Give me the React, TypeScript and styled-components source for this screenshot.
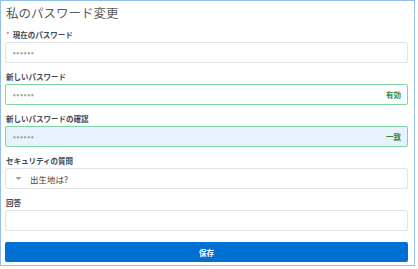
import React from "react";
import styled, { createGlobalStyle } from "styled-components";

const Global = createGlobalStyle`
  html, body { margin: 0; padding: 0; background: #ffffff; }
  body { font-family: "Noto Sans CJK JP", "Noto Sans", sans-serif; }
  * { box-sizing: border-box; }
`;

const Frame = styled.div`
  width: 415px;
  height: 266px;
  border: 1px solid #93bfe8;
  padding: 4px 6px 0 4px;
  display: flex;
  flex-direction: column;
  gap: 10px;
`;

const Title = styled.h1`
  margin: 0 0 -10px 0;
  font-size: 12.5px;
  font-weight: 400;
  color: #5a5a5a;
  line-height: 16px;
  height: 26px;
  padding-left: 1px;
  flex-shrink: 0;
`;

const Field = styled.div`
  display: flex;
  flex-direction: column;
  flex-shrink: 0;
`;

const Label = styled.label`
  font-size: 7.5px;
  font-weight: 700;
  color: #444a55;
  line-height: 7px;
  height: 11px;
  display: flex;
  align-items: flex-start;
  gap: 3px;
  padding-left: 1px;
`;

const Required = styled.span`
  color: #e2524a;
  font-size: 8px;
  font-weight: 400;
`;

const Box = styled.div<{ $state?: "ok" | "focus" }>`
  height: 21px;
  border: 1px solid
    ${(p) => (p.$state ? "#7fd4a2" : "#e1e3ec")};
  border-radius: 2px;
  background: ${(p) => (p.$state === "focus" ? "#e8f2fc" : "#ffffff")};
  display: flex;
  align-items: center;
  padding: 0 6px 0 7px;
  gap: 8px;
`;

const Dots = styled.span`
  font-family: "DejaVu Sans", sans-serif;
  font-size: 3px;
  letter-spacing: 1px;
  color: #a2a2a2;
  flex: 1;
`;

const Status = styled.span`
  font-size: 7.5px;
  font-weight: 700;
  color: #2f8a3c;
`;

const Caret = styled.svg`
  width: 7px;
  height: 5px;
  margin-left: 2px;
`;

const SelectText = styled.span`
  font-size: 8.5px;
  color: #444444;
`;

const SaveButton = styled.button`
  margin-top: 1px;
  height: 20px;
  flex-shrink: 0;
  border: none;
  border-radius: 2px;
  background: #0070d2;
  color: #ffffff;
  font-family: "Noto Sans CJK JP", sans-serif;
  font-size: 7.5px;
  font-weight: 700;
  padding: 0;
  width: 100%;
`;

export default function App() {
  return (
    <>
      <Global />
      <Frame>
        <Title>私のパスワード変更</Title>
        <Field>
          <Label>
            <Required>*</Required>現在のパスワード
          </Label>
          <Box>
            <Dots>●●●●●●</Dots>
          </Box>
        </Field>
        <Field>
          <Label>新しいパスワード</Label>
          <Box $state="ok">
            <Dots>●●●●●●</Dots>
            <Status>有効</Status>
          </Box>
        </Field>
        <Field>
          <Label>新しいパスワードの確認</Label>
          <Box $state="focus">
            <Dots>●●●●●●</Dots>
            <Status>一致</Status>
          </Box>
        </Field>
        <Field>
          <Label>セキュリティの質問</Label>
          <Box>
            <Caret viewBox="0 0 7 5">
              <path d="M0.5 1 L3.5 4 L6.5 1 Z" fill="#9a9a9a" />
            </Caret>
            <SelectText>出生地は?</SelectText>
          </Box>
        </Field>
        <Field>
          <Label>回答</Label>
          <Box />
        </Field>
        <SaveButton>保存</SaveButton>
      </Frame>
    </>
  );
}
